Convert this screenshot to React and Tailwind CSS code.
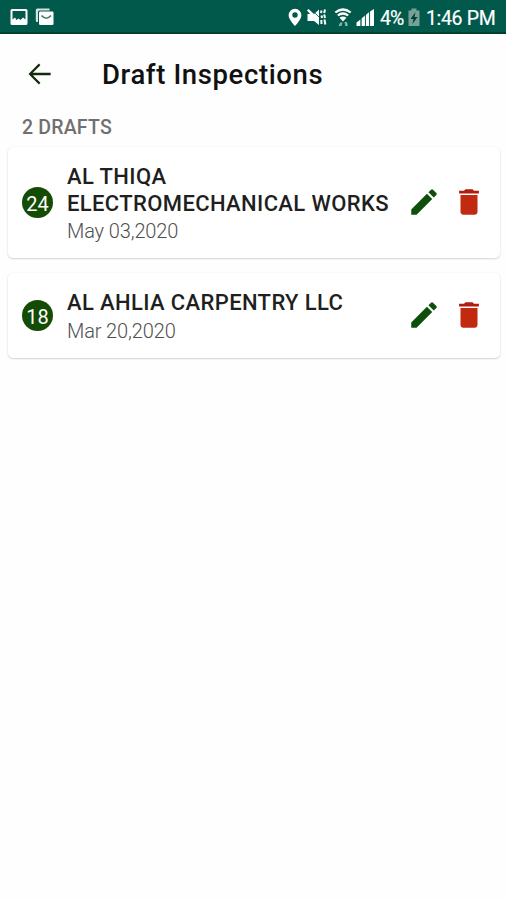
const drafts = [
  { id: 24, name: 'AL THIQA ELECTROMECHANICAL WORKS', date: 'May 03,2020', height: 'h-[111px]' },
  { id: 18, name: 'AL AHLIA CARPENTRY LLC', date: 'Mar 20,2020', height: 'h-[85px]' },
];

function StatusBar() {
  return (
    <header className="flex h-[34px] shrink-0 items-center border-b-2 border-[#00402f] bg-[#00594b] pl-[10px] pr-[11px] pt-[2px] text-white">
      <svg className="h-[18px] w-[18px]" viewBox="0 0 18 18">
        <path fill="#fff" fillRule="evenodd" d="M2 1h14q1.500 0 1.500 1.500v13q0 1.500-1.500 1.500H2Q.5 17 .5 15.500v-13Q.5 1 2 1zm.5 2v8.500L5 9.500l1.500 2.500 2-1.500 2 1.500 2.500-2.500 2.500 2V3z" />
      </svg>
      <svg className="ml-[7px] h-[18px] w-[19px]" viewBox="0 0 19 18">
        <path fill="#d3e4e0" d="M.8 2Q.8.500 2.300.500H14.500V2.600H4.500Q3 2.600 3 4.100v9.900H2Q.8 14 .8 12.500z" />
        <rect x="4" y="3.500" width="14.500" height="13.500" rx="1.200" fill="#fff" />
        <path fill="none" stroke="#48796f" strokeWidth="1.600" d="M6.500 7.500q4.700 5.500 9.500 0" />
      </svg>
      <div className="ml-auto flex items-center">
        <svg className="h-[19px] w-[14px]" viewBox="0 0 14 19">
          <path fill="#fff" fillRule="evenodd" d="M7 .8a6.400 6.400 0 0 0-6.400 6.400C.6 11.500 7 18 7 18s6.400-6.500 6.400-10.800A6.400 6.400 0 0 0 7 .8zm0 3.500a2.700 2.700 0 1 1 0 5.400 2.700 2.700 0 0 1 0-5.400z" />
        </svg>
        <svg className="ml-[5px] h-[19px] w-[20px]" viewBox="0 0 20 19">
          <path fill="#fff" d="M0 2.500L1.500 1 7 6l5-4.500V17L7 13H.5V6h2.500z" />
          <path stroke="#00594b" strokeWidth=".8" d="M7.500 4.500l5 5" />
          <path fill="none" stroke="#fff" strokeWidth="2" d="M14.500 2.500l-.5 2.500M14.500 7.500l.5 2.500M14.300 12l.2 4" />
          <path fill="none" stroke="#fff" strokeWidth="2" d="M18 1.500l-.8 3.500M17.200 6.500l.8 3.500M17.500 11.500l.8 5" />
        </svg>
        <svg className="ml-[7px] h-[19px] w-[18px]" viewBox="0 0 18 19">
          <g fill="none" stroke="#fff" strokeWidth="2.200">
            <path d="M1.300 4.500Q9-1.500 16.700 4.500M3.800 7.500q5.200-4 10.400 0" />
          </g>
          <path fill="#fff" d="M5.500 9.800q3.500-2.800 7 0l-3.500 3.600z" />
          <path fill="#7dbaab" d="M6.300 14.500l2.200 0-1 3.500H4.500zM10.500 14h2.500l.8 4h-2.500z" />
        </svg>
        <svg className="ml-[4px] h-[19px] w-[19px]" viewBox="0 0 19 19">
          <path fill="#fff" d="M.5 14.500l4-3V18h-4zM5.500 10.500L9 7.500V18H5.500zM9.800 7l3.400-3v14H9.800zM14 3.500l4-2.500v17h-4z" />
          <path stroke="#00594b" strokeWidth=".6" d="M9.400 5v13M13.600 2v16M5 9v9" />
        </svg>
        <span className="ml-[5px] w-[25px] whitespace-nowrap pt-[3px] text-[19.500px] leading-[22px] tracking-[-0.900px] [-webkit-text-stroke:0.2px_white]">4%</span>
        <svg className="ml-[3px] h-[19px] w-[12px]" viewBox="0 0 12 19">
          <path fill="#75a197" d="M3.500.500h5V2.500h3V18H.5V2.500h3z" />
          <path fill="#003f35" d="M7.500 4L2.500 11h3L4.500 16l5-7h-3z" />
        </svg>
        <span className="ml-[6px] w-[69px] whitespace-nowrap pt-[3px] text-[19.500px] leading-[22px] tracking-[-0.350px] [-webkit-text-stroke:0.2px_white]">1:46 PM</span>
      </div>
    </header>
  );
}

function DraftCard({ draft }) {
  return (
    <li className={`flex items-center rounded-[5px] bg-white pl-[14px] pr-[14px] shadow-[0_1px_2px_rgba(0,0,0,0.16),0_0_2px_rgba(0,0,0,0.06)] ${draft.height}`}>
      <span className="flex h-[31px] w-[31px] shrink-0 items-center justify-center rounded-full bg-[#144b05] pt-[2px] text-[20px] leading-none text-white">
        {draft.id}
      </span>
      <div className="ml-[14px] w-[330px] pt-[3px]">
        <h2 className="text-[22px] font-medium leading-[26.500px] tracking-[0.370px] text-[#1f1f1f]">{draft.name}</h2>
        <p className="mt-px text-[20px] font-light leading-[26px] tracking-[-0.130px] text-[#505050]">{draft.date}</p>
      </div>
      <div className="ml-auto flex gap-[11px] pb-px">
        <button type="button" aria-label="Edit">
          <svg className="h-[34px] w-[34px]" viewBox="0 0 24 24" fill="#0d4f0b">
            <path d="M3 17.250V21h3.750L17.810 9.940l-3.750-3.750L3 17.250zM20.710 7.040a1 1 0 0 0 0-1.410l-2.340-2.340a1 1 0 0 0-1.410 0l-1.830 1.830 3.750 3.750 1.830-1.830z" />
          </svg>
        </button>
        <button type="button" aria-label="Delete">
          <svg className="h-[34px] w-[34px]" viewBox="0 0 24 24" fill="#c12a10">
            <path d="M6 19c0 1.100.9 2 2 2h8c1.100 0 2-.9 2-2V7H6v12z" />
            <path fill="#b41b10" d="M19 4h-3.500l-1-1h-5l-1 1H5v2h14V4z" />
          </svg>
        </button>
      </div>
    </li>
  );
}

export default function App() {
  return (
    <div className="flex h-[900px] w-[506px] flex-col overflow-hidden bg-[#fefefe] font-[Roboto,sans-serif]">
      <StatusBar />
      <div className="flex h-[80px] shrink-0 items-center pl-[23px]">
        <button type="button" aria-label="Back">
          <svg className="h-[34px] w-[34px]" viewBox="0 0 24 24">
            <path fill="#102c0a" d="M19.500 11.150H6.900l5.400-5.400-1.100-1.150L3.900 12l7.300 7.400 1.100-1.150-5.400-5.400h12.600z" />
          </svg>
        </button>
        <h1 className="ml-[45px] pt-[2px] text-[27.500px] font-medium leading-[36px] tracking-[0.620px] text-[#111]">Draft Inspections</h1>
      </div>
      <p className="h-[33px] shrink-0 pl-[22px] pt-[2px] text-[19.500px] font-medium leading-[24px] tracking-[0.200px] text-[#707070]">2 DRAFTS</p>
      <ul className="flex flex-col gap-[15px] pl-[8px] pr-[6px]">
        {drafts.map((draft) => (
          <DraftCard key={draft.id} draft={draft} />
        ))}
      </ul>
    </div>
  );
}
